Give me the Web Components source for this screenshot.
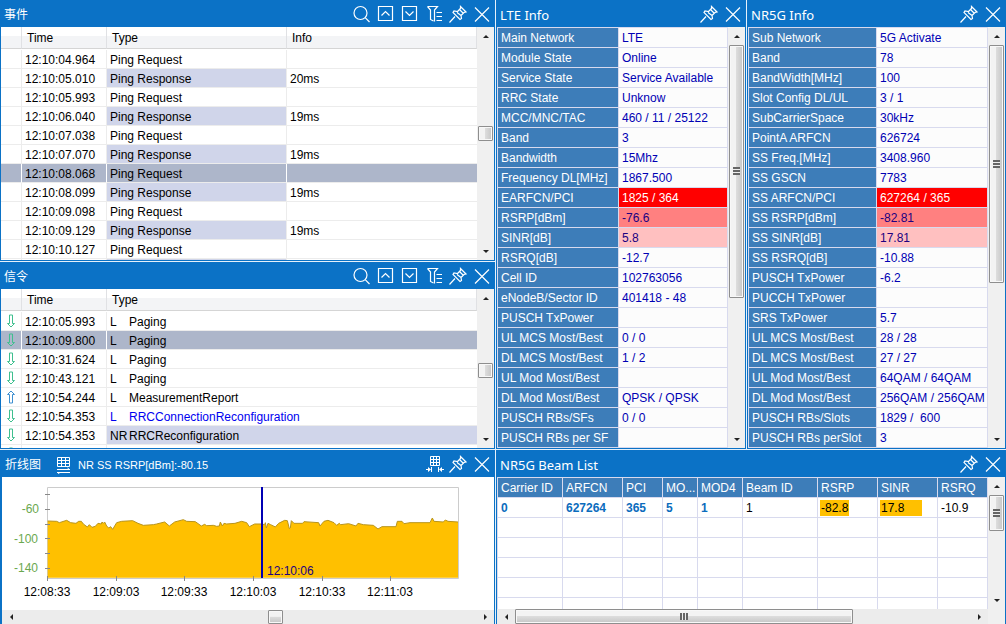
<!DOCTYPE html>
<html lang="zh-CN">
<head>
<meta charset="utf-8">
<title>Network Monitor</title>
<style>
  html, body { margin: 0; height: 100%; }
  body {
    --blue: #0b72c6;
    --cell: #3d7db9;
    --line: #d8daee;
    font: 12px/18px "Liberation Sans", Arial, "Noto Sans CJK SC", sans-serif;
    color: #000;
    background: #e6f1fb;
  }
</style>
</head>
<body>
<monitor-app></monitor-app>
<script>
const ICONS = {
  search: ['Search', '<circle cx="10.5" cy="10" r="6.5"/><path d="M15.2 14.700 19.500 19"/>'],
  prev: ['Previous', '<path d="M4.500 3.500h14v14h-14zM7.500 12.500l4-4 4 4"/>'],
  next: ['Next', '<path d="M4.500 3.500h14v14h-14zM7.500 8.500l4 4 4-4"/>'],
  filter: ['Filter', '<path d="M5.500 3.500h10l-3 3.500v11.500M5.500 3.500l3 3.500v9.500l3 1.500M14.500 9.500h5.500M14.500 13.500h5.500M14.500 17.500h5.500"/>'],
  pin: ['Pin', '<path d="M14.500 3.500l5.500 5.500-2 .5-3 3 .5 3-1.500 1-7-7 1-1.500 3.500.5 3-3zM11 9.500l4 3M13 6l4 4M9 13.500l-5.500 6"/>'],
  close: ['Close', '<path d="M5 4.500l14 14M19 4.500l-14 14"/>'],
  fit: ['Fit columns', '<path stroke-width="1" d="M8.500 3.500h9v9h-9zM11.500 3.500v9M14.500 3.500v9M8.500 6.500h9M8.500 9.500h9M4 16.500h4M22 16.500h-4M9.500 14v5M16.500 14v5"/><path fill="#fff" stroke="none" d="M6 14l3 2.500-3 2.500zM20 14l-3 2.500 3 2.500z"/>']
};

class TitleTools extends HTMLElement {
  connectedCallback() {
    const root = this.attachShadow({ mode: 'open' });
    root.innerHTML = `
      <style>
        :host { display: flex; flex: none; }
        button { width: 24px; height: 24px; padding: 0; border: 0; background: none; display: block; }
        svg { display: block; fill: none; stroke: #fff; stroke-width: 1.2; }
      </style>` + this.getAttribute('names').split(' ').map(n =>
        `<button type="button" aria-label="${ICONS[n][0]}"><svg width="24" height="24" viewBox="0 0 24 24">${ICONS[n][1]}</svg></button>`).join('');
  }
}
customElements.define('title-tools', TitleTools);

class ToolPanel extends HTMLElement {
  connectedCallback() {
    this.attachShadow({ mode: 'open' }).innerHTML = `
      <style>
        :host { display: flex; flex-direction: column; box-sizing: border-box; min-width: 0; min-height: 0;
                background: var(--blue); border: 0 solid var(--blue); border-width: 0 1px 1px 1px; overflow: hidden; }
        header { display: flex; align-items: center; flex: none; height: 24px; color: #fff; padding: 3px 0 0 3px; }
        h2 { margin: 0; font: var(--title-size, 12px)/20px "Noto Sans", "Noto Sans CJK SC", sans-serif; white-space: nowrap; }
        .lead { flex: 1; min-width: 0; }
        .body { flex: 1; min-height: 0; display: flex; background: #fff; }
      </style>
      <header><h2>${this.getAttribute('heading')}</h2><div class="lead"><slot name="lead"></slot></div>
      <title-tools names="${this.getAttribute('tools')}"></title-tools></header>
      <div class="body"><slot></slot></div>`;
  }
}
customElements.define('tool-panel', ToolPanel);

/* Scroll bar: the three numbers of "span" are the free space before the thumb, the thumb, and the space after. */
class ScrollRail extends HTMLElement {
  connectedCallback() {
    const [before, thumb, after] = this.getAttribute('span').split(' ');
    const across = this.hasAttribute('across');
    const arrow = across
      ? ['M6 1v6L3 4z', 'M2 1v6l3-3z']
      : ['M1 6h6L4 3z', 'M1 2h6L4 5z'];
    this.attachShadow({ mode: 'open' }).innerHTML = `
      <style>
        :host { display: flex; flex: none; flex-direction: ${across ? 'row' : 'column'}; box-sizing: border-box;
                ${across ? 'height: var(--rail, 15px)' : 'width: 17px; padding: 0 1px'}; background: ${across ? '#ececec' : '#f0f0f0'}; }
        .end { flex: 0 0 17px; display: flex; align-items: center; justify-content: center; }
        svg { display: block; fill: #222; }
        .thumb { box-sizing: border-box; border: 1px solid #8e8e8e; border-radius: 1px; display: flex;
                 align-items: center; justify-content: center; box-shadow: inset 0 0 0 1px #f8f8f8;
                 background: linear-gradient(to ${across ? 'bottom' : 'right'}, #f3f3f3 0 45%, #dcdcdc 50%, #c6c6c6); }
        .grip { ${across ? 'width: 8px; height: 7px' : 'width: 7px; height: 8px'};
                background: repeating-linear-gradient(to ${across ? 'right' : 'bottom'}, #666 0 2px, #eee 2px 3px); }
      </style>
      <div class="end"><svg width="8" height="8"><path d="${arrow[0]}"/></svg></div>
      <div style="flex: ${before} 0 0"></div>
      <div class="thumb" style="flex: ${thumb > 20 ? thumb + ' 0 0' : '0 0 ' + thumb + 'px'}">${thumb > 20 ? '<div class="grip"></div>' : ''}</div>
      <div style="flex: ${after} 0 0"></div>
      <div class="end"><svg width="8" height="8"><path d="${arrow[1]}"/></svg></div>`;
  }
}
customElements.define('scroll-rail', ScrollRail);

const LOG_STYLE = `
  :host { display: block; flex: 1; min-width: 0; overflow: hidden; }
  table { width: 100%; table-layout: fixed; border-collapse: separate; border-spacing: 0; }
  th, td { text-align: left; font-weight: normal; white-space: nowrap; overflow: hidden; }
  th { height: 22px; padding: 2px 0 0 5px; line-height: 19px; box-sizing: border-box; border-right: 1px solid #e0e1e4;
       border-bottom: 1px solid #d5d5d5; background: linear-gradient(#fff 0 9px, #f3f4f6 9px); }
  td { height: 16px; padding: 2px 0 0 3px; line-height: 16px; border-right: 1px solid #ececec; border-bottom: 1px solid #ececec; }
  .gap td { height: 1px; line-height: 0; border: 0; padding: 0; }
  td:last-child { border-right: 0; }
  .sel td { background: #adb6ca; border-right-color: #fff; }
  td.tint { background: #d0d5ea; }
  td.mark { padding: 0; } .mark svg { display: block; margin: 0 auto; fill: #fff; }
`;

class EventLog extends HTMLElement {
  connectedCallback() {
    const rows = [
      ['04.964'], ['05.010', '20ms'], ['05.993'], ['06.040', '19ms'], ['07.038'], ['07.070', '19ms'],
      ['08.068'], ['08.099', '19ms'], ['09.098'], ['09.129', '19ms'], ['10.127']];
    this.attachShadow({ mode: 'open' }).innerHTML = `
      <style>${LOG_STYLE}</style>
      <table><colgroup><col style="width:21px"><col style="width:85px"><col style="width:180px"><col></colgroup>
      <thead><tr><th></th><th>Time</th><th>Type</th><th>Info</th></tr></thead>
      <tbody><tr class="gap"><td colspan="4"></td></tr>${rows.map(([t, info]) => `
        <tr${t === '08.068' ? ' class="sel"' : ''}><td></td><td>12:10:${t}</td>
        <td${info ? ' class="tint"' : ''}>Ping ${info ? 'Response' : 'Request'}</td><td>${info || ''}</td></tr>`).join('')}
        <tr><td></td><td></td><td class="tint"></td><td></td></tr>
      </tbody></table>`;
  }
}
customElements.define('event-log', EventLog);

class SignalLog extends HTMLElement {
  connectedCallback() {
    const rows = [
      ['05.993', 'L', 'Paging'], ['09.800', 'L', 'Paging', 'sel'], ['31.624', 'L', 'Paging'], ['43.121', 'L', 'Paging'],
      ['54.244', 'L', 'MeasurementReport', 'up'], ['54.353', 'L', 'RRCConnectionReconfiguration', 'link'],
      ['54.353', 'NR', 'RRCReconfiguration', 'nr']];
    const down = '<svg width="10" height="18"><path stroke="#3fbf8f" d="M3.500 3v8.500h-2L5 15l3.500-3.500h-2V3z"/></svg>';
    const up = '<svg width="10" height="18"><path stroke="#3d8fd0" d="M3.500 15V6.500h-2L5 3l3.500 3.500h-2V15z"/></svg>';
    this.attachShadow({ mode: 'open' }).innerHTML = `
      <style>${LOG_STYLE}
        .net { display: inline-block; width: 19px; }
        .link .msg { color: #0000f0; }
        .sel svg { fill: #adb6ca; }
      </style>
      <table><colgroup><col style="width:21px"><col style="width:85px"><col></colgroup>
      <thead><tr><th></th><th>Time</th><th>Type</th></tr></thead>
      <tbody><tr class="gap"><td colspan="3"></td></tr>${rows.map(([t, net, name, kind]) => `
        <tr class="${kind || ''}"><td class="mark">${kind === 'up' ? up : down}</td><td>12:10:${t}</td>
        <td class="msg${kind === 'nr' ? ' tint' : ''}"><span class="net">${net}</span>${name}</td></tr>`).join('')}
        <tr><td class="mark">${down}</td><td></td><td></td></tr>
      </tbody></table>`;
  }
}
customElements.define('signal-log', SignalLog);

const INFO = {
  lte: [['Main Network', 'LTE'], ['Module State', 'Online'], ['Service State', 'Service Available'], ['RRC State', 'Unknow'],
    ['MCC/MNC/TAC', '460 / 11 / 25122'], ['Band', '3'], ['Bandwidth', '15Mhz'], ['Frequency DL[MHz]', '1867.500'],
    ['EARFCN/PCI', '1825 / 364', 'hot'], ['RSRP[dBm]', '-76.6', 'warm'], ['SINR[dB]', '5.8', 'mild'], ['RSRQ[dB]', '-12.7'],
    ['Cell ID', '102763056'], ['eNodeB/Sector ID', '401418 - 48'], ['PUSCH TxPower', ''], ['UL MCS Most/Best', '0 / 0'],
    ['DL MCS Most/Best', '1 / 2'], ['UL Mod Most/Best', ''], ['DL Mod Most/Best', 'QPSK / QPSK'], ['PUSCH RBs/SFs', '0 / 0'],
    ['PUSCH RBs per SF', '']],
  nr: [['Sub Network', '5G Activate'], ['Band', '78'], ['BandWidth[MHz]', '100'], ['Slot Config DL/UL', '3 / 1'],
    ['SubCarrierSpace', '30kHz'], ['PointA ARFCN', '626724'], ['SS Freq.[MHz]', '3408.960'], ['SS GSCN', '7783'],
    ['SS ARFCN/PCI', '627264 / 365', 'hot'], ['SS RSRP[dBm]', '-82.81', 'warm'], ['SS SINR[dB]', '17.81', 'mild'],
    ['SS RSRQ[dB]', '-10.88'], ['PUSCH TxPower', '-6.2'], ['PUCCH TxPower', ''], ['SRS TxPower', '5.7'],
    ['UL MCS Most/Best', '28 / 28'], ['DL MCS Most/Best', '27 / 27'], ['UL Mod Most/Best', '64QAM / 64QAM'],
    ['DL Mod Most/Best', '256QAM / 256QAM'], ['PUSCH RBs/Slots', '1829 /&nbsp; 600'], ['PUSCH RBs perSlot', '3']]
};

class InfoTable extends HTMLElement {
  connectedCallback() {
    this.attachShadow({ mode: 'open' }).innerHTML = `
      <style>
        :host { display: block; flex: 1; min-width: 0; border: 1px solid var(--line); border-width: 1px 0 0 1px; }
        table { width: 100%; table-layout: fixed; border-collapse: separate; border-spacing: 0; }
        th, td { height: 18px; padding: 1px 0 0 3px; line-height: 18px; text-align: left; font-weight: normal; white-space: nowrap;
                 overflow: hidden; border: 1px solid var(--line); border-width: 0 1px 1px 0; }
        th { width: var(--name-width); background: var(--cell); color: #fff; }
        td { background: #fcfcfc; color: #0000b4; }
        .hot { background: #f00; color: #fff; }
        .warm { background: #ff8080; color: #200080; }
        .mild { background: #ffc0c0; color: #200080; }
      </style>
      <table>${INFO[this.getAttribute('source')].map(([k, v, c]) =>
        `<tr><th scope="row">${k}</th><td${c ? ` class="${c}"` : ''}>${v}</td></tr>`).join('')}</table>`;
  }
}
customElements.define('info-table', InfoTable);

class ChartKey extends HTMLElement {
  connectedCallback() {
    this.attachShadow({ mode: 'open' }).innerHTML = `
      <style>
        :host { display: flex; align-items: center; gap: 7px; padding-left: 16px; font-size: 11px; white-space: nowrap; }
        svg { display: block; flex: none; stroke: #fff; fill: none; }
      </style>
      <svg width="14" height="18"><path d="M.500 1.500h12v9h-12zM4.500 1.500v9M8.500 1.500v9M.500 4.500h12M.500 7.500h12M0 13.500h13M0 16.500h13M10.500 12l2 1.500M2.500 18l-2-1.500"/></svg>
      <span>NR SS RSRP[dBm]:-80.15</span>`;
  }
}
customElements.define('chart-key', ChartKey);

class RsrpChart extends HTMLElement {
  connectedCallback() {
    const series = '143,225 170,226 178,230 200,223 212,230 228,232 236,226 244,226 250,234 262,243 268,236 276,244 286,241 294,232 304,234 306,228 310,232 314,228 320,240 326,246 332,242 338,250 344,240 350,230 365,226 398,224 414,232 430,238 460,236 470,234 494,228 508,240 524,228 550,221 560,226 586,227 604,240 614,235 620,239 640,238 650,241 658,240 661,228 667,240 672,232 680,234 705,232 725,226 740,230 748,242 764,234 784,234 794,236 796,230 799,246 804,232 812,236 826,243 836,232 854,223 862,224 868,248 871,246 874,224 882,232 908,232 912,227 956,230 960,240 972,226 984,223 1002,230 1010,238 1018,232 1022,236 1046,233 1068,240 1074,232 1090,236 1120,238 1134,249 1146,242 1188,242 1192,226 1206,226 1212,233 1230,230 1290,230 1297,216 1302,226 1330,228 1336,222 1344,226 1374,228';
    const yTicks = [17, 32, 47, 61, 76, 91];
    const xTicks = [[45, '12:08:33'], [114, '12:09:03'], [182, '12:09:33'], [251, '12:10:03'], [320, '12:10:33'], [388, '12:11:03']];
    this.attachShadow({ mode: 'open' }).innerHTML = `
      <style>
        :host { display: block; flex: 1; min-height: 0; background: #fff; }
        svg { display: block; width: 100%; height: 100%; }
        text { font-size: 12px; }
      </style>
      <svg viewBox="0 0 492 133" preserveAspectRatio="xMinYMin meet" role="img" aria-label="NR SS RSRP">
        <path d="M45.500 10.500h411v91h-411z" fill="#fff" stroke="#ccc"/>
        <g transform="translate(-2 -31) scale(.33333)">
          <polygon points="143,395 ${series} 1374,395" fill="#ffc000"/>
          <polyline points="${series}" fill="none" stroke="#b8941c" stroke-width="3"/>
        </g>
        <g stroke="#888">${yTicks.map(y => `<path d="M43 ${y}.500h5"/>`).join('')}${xTicks.map(([x]) => `<path d="M${x}.500 99v5"/>`).join('')}</g>
        <g fill="#6aa84f" text-anchor="end"><text x="37" y="36">-60</text><text x="36" y="66">-100</text><text x="36" y="95">-140</text></g>
        <path d="M259 10h2v91h-2z" fill="#0000b4"/>
        <text x="265" y="98" fill="#200080">12:10:06</text>
        <g text-anchor="middle">${xTicks.map(([x, t]) => `<text x="${x}" y="119">${t}</text>`).join('')}</g>
      </svg>`;
  }
}
customElements.define('rsrp-chart', RsrpChart);

class BeamTable extends HTMLElement {
  connectedCallback() {
    const cols = [['Carrier ID', 65], ['ARFCN', 60], ['PCI', 40], ['MO...', 35], ['MOD4', 45], ['Beam ID', 75], ['RSRP', 60], ['SINR', 60], ['RSRQ', 0]];
    const blank = `<tr>${cols.map(() => '<td></td>').join('')}</tr>`;
    this.attachShadow({ mode: 'open' }).innerHTML = `
      <style>
        :host { display: block; flex: 1; min-width: 0; overflow: hidden; border: 1px solid var(--line); border-width: 1px 0 0 1px; }
        table { width: 100%; table-layout: fixed; border-collapse: separate; border-spacing: 0; }
        th, td { height: 18px; padding: 1px 0 0 3px; line-height: 18px; text-align: left; font-weight: normal;
                 white-space: nowrap; overflow: hidden; border: 1px solid var(--line); border-width: 0 1px 1px 0; }
        th { background: var(--cell); color: #fff; }
        b { color: #0b6cbd; }
        .mark { padding-left: 2px; }
        mark { display: block; box-sizing: border-box; height: 16px; line-height: 16px; padding-left: 1px; background: #ffc000; color: #000; }
        .short { width: 29px; } .long { width: 42px; }
      </style>
      <table><colgroup>${cols.map(([, w]) => w ? `<col style="width:${w}px">` : '<col>').join('')}</colgroup>
      <thead><tr>${cols.map(([n]) => `<th scope="col">${n}</th>`).join('')}</tr></thead>
      <tbody><tr><td><b>0</b></td><td><b>627264</b></td><td><b>365</b></td><td><b>5</b></td><td><b>1</b></td><td>1</td>
      <td class="mark"><mark class="short">-82.8</mark></td><td class="mark"><mark class="long">17.8</mark></td><td>-10.9</td></tr>
      ${blank.repeat(6)}</tbody></table>`;
  }
}
customElements.define('beam-table', BeamTable);

class MonitorApp extends HTMLElement {
  connectedCallback() {
    this.attachShadow({ mode: 'open' }).innerHTML = `
      <style>
        :host { display: grid; grid-template-columns: 495fr 250fr 259fr; grid-template-rows: auto minmax(0, 1fr);
                gap: 1px; height: 100vh; min-width: 0; overflow: hidden; }
        .logs { display: grid; grid-template-rows: 261fr 187fr; gap: 1px; contain: size; min-width: 0; }
        .lte, .nr, .beams { --title-size: 13px; }
        .lte { --name-width: 117px; }
        .nr { --name-width: 124px; }
        .beams { grid-column: span 2; border-bottom: 0; }
        .chart { border-bottom: 0; border-left-width: 2px; --rail: 14px; }
        .stack, .pair { display: flex; flex: 1; min-width: 0; min-height: 0; }
        .stack { flex-direction: column; }
        .corner { flex: none; width: 17px; background: #f0f0f0; }
        .foot { display: flex; }
        .foot scroll-rail { flex: 1; }
      </style>
      <div class="logs">
        <tool-panel heading="事件" tools="search prev next filter pin close">
          <event-log></event-log><scroll-rail span="82 15 102"></scroll-rail></tool-panel>
        <tool-panel heading="信令" tools="search prev next filter pin close">
          <signal-log></signal-log><scroll-rail span="57 15 53"></scroll-rail></tool-panel>
      </div>
      <tool-panel class="lte" heading="LTE Info" tools="pin close">
        <info-table source="lte"></info-table><scroll-rail span="1 252 134"></scroll-rail></tool-panel>
      <tool-panel class="nr" heading="NR5G Info" tools="pin close">
        <info-table source="nr"></info-table><scroll-rail span="1 237 149"></scroll-rail></tool-panel>
      <tool-panel class="chart" heading="折线图" tools="fit pin close">
        <chart-key slot="lead"></chart-key>
        <div class="stack"><rsrp-chart></rsrp-chart><scroll-rail across span="249 15 194"></scroll-rail></div></tool-panel>
      <tool-panel class="beams" heading="NR5G Beam List" tools="pin close">
        <div class="stack">
          <div class="pair"><beam-table></beam-table><scroll-rail span="1 35 62"></scroll-rail></div>
          <div class="foot"><scroll-rail across span="1 337 119"></scroll-rail><div class="corner"></div></div>
        </div></tool-panel>`;
  }
}
customElements.define('monitor-app', MonitorApp);
</script>
</body>
</html>
